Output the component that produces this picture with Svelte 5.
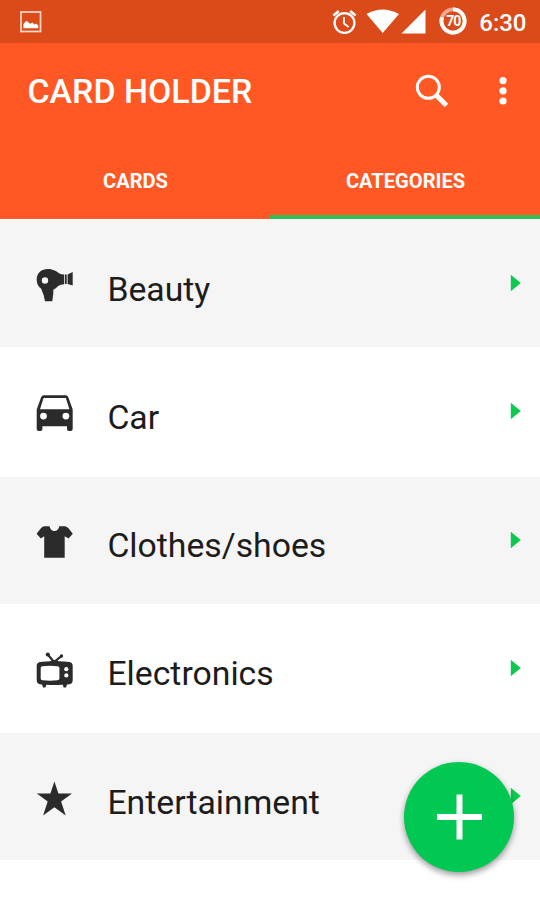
<script>
let tabs = ['CARDS', 'CATEGORIES'];
let activeTab = $state('CATEGORIES');

let categories = [
     {name: 'Beauty', icon: 'dryer'},
     {name: 'Car', icon: 'car'},
     {name: 'Clothes/shoes', icon: 'shirt'},
     {name: 'Electronics', icon: 'tv'},
     {name: 'Entertainment', icon: 'star'}
];
</script>

<div class="screen">
     <div class="status">
          <svg class="picture" width="22" height="22" viewBox="0 0 22 22">
               <rect x="1" y="1" width="19.5" height="19.5" fill="none" stroke="#ffd9cc" stroke-width="1.7" />
               <path d="M3.4 17.3V13L6.5 9.8L10 12.8L12.5 11.4L14.5 13.4L16 12.4L18.2 14.6V17.3Z" fill="#fff" />
          </svg>
          <div class="indicators">
               <svg class="alarm" width="26" height="28" viewBox="0 0 26 28" fill="none" stroke="#fff">
                    <circle cx="12.5" cy="15" r="9.9" stroke-width="2.3" />
                    <path d="M1.4 7.4L6.8 2.9M18.2 2.9L23.6 7.4" stroke-width="2.6" />
                    <path d="M12 9V15.5L16.6 19" stroke-width="1.8" />
               </svg>
               <svg class="wifi" width="34" height="26" viewBox="0 0 34 26" fill="#fff">
                    <path d="M0.5 6Q16.7 -3 33 6L16.7 25Z" />
               </svg>
               <svg class="signal" width="25" height="26" viewBox="0 0 25 26" fill="#fff">
                    <path d="M24.5 1.5V25.5H0.5Z" />
               </svg>
               <div class="battery">
                    <svg width="28" height="28" viewBox="0 0 28 28" fill="none" stroke-width="3.8">
                         <circle cx="14" cy="14" r="11.6" stroke="#f0a78f" />
                         <path d="M14 2.4A11.6 11.6 0 1 1 3 10.4" stroke="#fff" />
                    </svg>
                    <span>70</span>
               </div>
               <span class="time">6:30</span>
          </div>
     </div>

     <header>
          <div class="toolbar">
               <h1>CARD HOLDER</h1>
               <button type="button" class="search" aria-label="Search">
                    <svg width="34" height="34" viewBox="0 0 34 34" fill="none" stroke="#fff">
                         <circle cx="13.3" cy="13.3" r="11" stroke-width="3" />
                         <path d="M20.5 20.5L31.5 31.5" stroke-width="5" />
                    </svg>
               </button>
               <button type="button" class="more" aria-label="More">
                    <svg width="8" height="30" viewBox="0 0 8 30" fill="#fff">
                         <circle cx="4" cy="4.6" r="3.6" />
                         <circle cx="4" cy="14.8" r="3.6" />
                         <circle cx="4" cy="25" r="3.6" />
                    </svg>
               </button>
          </div>
          <nav>
               {#each tabs as tab}
                    <button type="button" class="tab" class:active={tab == activeTab} onclick={() => activeTab = tab}>
                         {tab}
                    </button>
               {/each}
          </nav>
     </header>

     <ul>
          {#each categories as item}
          <li>
               <svg class="icon" width="40" height="40" viewBox="0 0 40 40">
                    {#if item.icon == 'dryer'}
                         <path fill-rule="evenodd" d="M1.7 14.5C1.7 8 6.5 4 13 4C18.5 4 21.5 6.5 24 8.2Q26 9.4 29.2 9.4V19.2Q25.5 19.4 23.5 20.8C21.5 22.8 20 24 18.3 24.8V28.5L17.3 36.3H10L8.6 30L6.2 23.8C3.3 21.8 1.7 18.8 1.7 14.5ZM10 12.3A3.2 3.2 0 1 0 10 18.7A3.2 3.2 0 1 0 10 12.3Z" />
                         <path d="M30 9.5H31.7V19H30ZM32.6 9.4L37.7 7V20.6L32.6 18.9Z" />
                    {:else if item.icon == 'car'}
                         <path fill-rule="evenodd" d="M6 4.5Q6.7 2.2 9 2.2H30.4Q32.7 2.2 33.4 4.5L37.7 16.5V36Q37.7 38 35.7 38H34Q32 38 32 36V33.3H7.4V36Q7.4 38 5.4 38H3.7Q1.7 38 1.7 36V16.5ZM8.6 5L5 16.2H34.4L30.8 5ZM8.5 19.7A3.4 3.4 0 1 0 8.5 26.5A3.4 3.4 0 1 0 8.5 19.7ZM30.9 19.7A3.4 3.4 0 1 0 30.9 26.5A3.4 3.4 0 1 0 30.9 19.7Z" />
                    {:else if item.icon == 'shirt'}
                         <path d="M9 4.2H14.5Q15.5 9 19.4 9Q23.3 9 24.3 4.2H29.8Q32 4.6 33.5 6.3L37.8 11.7L33.6 16.4L29.7 14.3V35.8H9.2V14.3L5.8 16.4L1.6 11.7L5.9 6.3Q7.2 4.6 9 4.2Z" />
                    {:else if item.icon == 'tv'}
                         <path d="M12.5 4.2L19 12L27 5.6" fill="none" stroke="#2b2b2b" stroke-width="2.2" />
                         <circle cx="12.8" cy="4.5" r="2.1" />
                         <circle cx="26.5" cy="6" r="1.7" />
                         <path fill-rule="evenodd" d="M5 12Q11 11.2 15.2 11.2Q19.4 8.7 23.8 11.2Q29 11.2 34.5 12Q37.7 12.5 37.7 16V30Q37.7 33.8 34.5 34.2L32 34.6L31 37.5H28.6L27.8 34.8Q19 35.3 11.5 34.8L10.3 37.5H8L7 34.5L5 34.2Q1.7 33.8 1.7 30V16Q1.7 12.5 5 12ZM7.5 16.2Q5.7 16.2 5.7 18V28.5Q5.7 30.3 7.5 30.3Q15 31 22.5 30.3Q24.4 30.3 24.4 28.5V18Q24.4 16.2 22.5 16.2Q15 15.5 7.5 16.2Z" />
                         <circle cx="31.3" cy="19.2" r="2.1" fill="#fff" />
                         <circle cx="31.3" cy="25.4" r="2.1" fill="#fff" />
                    {:else}
                         <path d="M19.4 3.5L23.4 15.5H37L26.1 23.4L30.7 37.5L19.4 29.3L8.1 37.5L12.7 23.4L1.8 15.5H15.4Z" />
                    {/if}
               </svg>
               <span class="name">{item.name}</span>
               <svg class="arrow" width="11" height="18" viewBox="0 0 11 18">
                    <path d="M0.8 0.8L10.8 9L0.8 17.2Z" />
               </svg>
          </li>
          {/each}
     </ul>

     <button type="button" class="fab" aria-label="Add">
          <svg width="46" height="46" viewBox="0 0 46 46" stroke="#fff" stroke-width="6">
               <path d="M23.5 0.5V45.5M1 23H46" />
          </svg>
     </button>
</div>

<style>
     :global(body) {
          background-color: #fff;
     }
     .screen {
          position: relative;
          width: 540px;
          height: 900px;
          overflow: hidden;
          background-color: #fff;
          font-family: Roboto, sans-serif;
     }
     svg {
          display: block;
          flex: none;
     }
     button {
          padding: 0;
          border: 0;
          background: none;
          font-family: inherit;
          color: #fff;
     }
     .status {
          display: flex;
          justify-content: space-between;
          height: 42.5px;
          padding: 0 13.5px 0 20px;
          box-sizing: border-box;
          background-color: #db4a19;
          color: #fff;
     }
     .picture {
          margin-top: 11px;
     }
     .indicators {
          display: flex;
          align-items: flex-start;
     }
     .alarm {
          margin: 8px 8px 0 0;
     }
     .wifi {
          margin: 8px 1px 0 0;
     }
     .signal {
          margin-top: 8px;
     }
     .battery {
          display: grid;
          place-items: center;
          margin: 7px 12px 0 13px;
     }
     .battery svg, .battery span {
          grid-area: 1 / 1;
     }
     .battery span {
          font-size: 14px;
          font-weight: 700;
          letter-spacing: -1px;
     }
     .time {
          margin-top: 9px;
          font-size: 24px;
          font-weight: 500;
          line-height: 28px;
     }
     header {
          height: 176.5px;
          background-color: #ff5824;
     }
     .toolbar {
          display: flex;
          align-items: center;
          height: 97px;
          padding: 0 33px 0 27.5px;
     }
     h1 {
          flex: 1;
          margin: 0;
          color: #fff;
          font-size: 33.9px;
          font-weight: 500;
          white-space: nowrap;
     }
     .more {
          margin-left: 50px;
     }
     nav {
          display: flex;
          height: 79.5px;
     }
     .tab {
          flex: 1;
          padding: 7px 0 0 1px;
          border-bottom: 4px solid transparent;
          font-size: 20.1px;
          font-weight: 700;
     }
     .tab.active {
          border-bottom-color: #2ebf55;
     }
     ul {
          display: flex;
          flex-direction: column;
          gap: 1.25px;
          margin: 1px 0 0;
          padding: 0;
          list-style: none;
     }
     li {
          display: flex;
          align-items: center;
          height: 127px;
          padding: 0 19px 0 35px;
          box-sizing: border-box;
     }
     li:nth-child(odd) {
          background-color: #f5f5f5;
     }
     .icon {
          margin-top: 3px;
          fill: #2b2b2b;
     }
     .name {
          flex: 1;
          margin: 11px 0 0 32.4px;
          font-size: 33.75px;
          color: #1c1c1c;
     }
     .arrow {
          margin-bottom: 1px;
          fill: #0bc94f;
     }
     .fab {
          position: absolute;
          left: 404px;
          top: 762px;
          display: grid;
          place-items: center;
          width: 110px;
          height: 110px;
          border-radius: 50%;
          background-color: #00c853;
          box-shadow: 0 3px 6px rgba(0, 0, 0, 0.4);
     }
</style>
